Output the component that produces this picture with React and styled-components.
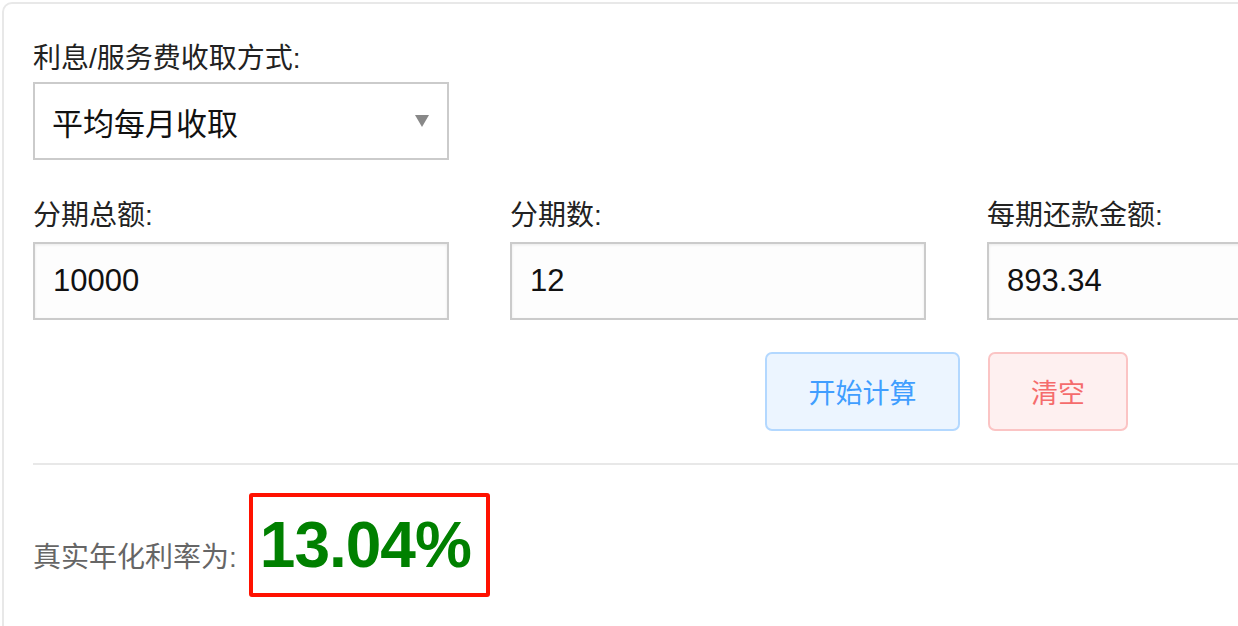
import React from 'react'
import styled, {createGlobalStyle} from 'styled-components'

const GlobalStyle = createGlobalStyle`
  html, body {
    margin: 0;
    padding: 0;
    background: #fff;
    overflow: hidden;
  }
  body {
    font-family: "Liberation Sans", "Noto Sans CJK SC", sans-serif;
    color: #222;
  }
`

const Card = styled.section`
  box-sizing: border-box;
  width: 1436px;
  margin: 2px 0 0 2px;
  padding: 38px 29px 40px;
  border: 2px solid #e8e8e8;
  border-radius: 10px;
`

const Label = styled.div`
  font-size: 28px;
  line-height: 34px;
  color: #222;
  margin-bottom: ${p => p.gap || 6}px;
`

const Select = styled.div`
  box-sizing: border-box;
  width: 416px;
  height: 78px;
  display: flex;
  align-items: center;
  justify-content: space-between;
  padding: 0 18px 0 17px;
  border: 2px solid #cbcbcb;
  background: #fff;
  font-size: 31px;
  color: #111;
`

const Caret = styled.svg`
  width: 14px;
  height: 12px;
  fill: #888;
`

const FieldRow = styled.div`
  display: grid;
  grid-template-columns: repeat(3, 416px);
  column-gap: 61px;
  margin-top: 39px;
`

const Field = styled.div`
  display: flex;
  flex-direction: column;
`

const Input = styled.input`
  box-sizing: border-box;
  width: 100%;
  height: 78px;
  padding: 0 18px;
  border: 2px solid #cbcbcb;
  background: #fdfdfd;
  box-shadow: inset 0 1px 3px rgba(0, 0, 0, 0.08);
  font-family: "Liberation Sans", sans-serif;
  font-size: 31px;
  color: #111;
  outline: none;
`

const Actions = styled.div`
  display: flex;
  gap: 28px;
  margin-top: 32px;
  padding-left: 732px;
`

const tones = {
  primary: {bg: '#ecf5ff', border: '#b3d8ff', color: '#409eff'},
  danger: {bg: '#fef0f0', border: '#fbc4c4', color: '#f56c6c'},
}

const Button = styled.button`
  box-sizing: border-box;
  width: ${p => p.$w}px;
  height: 79px;
  border-radius: 7px;
  border: 2px solid ${p => tones[p.$tone].border};
  background: ${p => tones[p.$tone].bg};
  color: ${p => tones[p.$tone].color};
  font-family: "Liberation Sans", "Noto Sans CJK SC", sans-serif;
  font-size: 27px;
  cursor: pointer;
`

const Divider = styled.hr`
  margin: 32px 0 28px;
  border: none;
  border-top: 2px solid #e8e8e8;
`

const Result = styled.div`
  display: flex;
  align-items: baseline;
  gap: 12px;
`

const ResultLabel = styled.span`
  font-size: 28px;
  color: #666;
`

const RateBox = styled.div`
  box-sizing: border-box;
  width: 241px;
  height: 104px;
  border: 4px solid #ff1100;
  border-radius: 3px;
  padding-left: 7px;
  font-family: "Liberation Sans", sans-serif;
  font-weight: bold;
  font-size: 64px;
  letter-spacing: -1px;
  line-height: 96px;
  color: #008000;
`

export default function App() {
  return (
    <>
      <GlobalStyle />
      <Card>
        <Label>利息/服务费收取方式:</Label>
        <Select>
          <span>平均每月收取</span>
          <Caret viewBox="0 0 14 12">
            <polygon points="0,0 14,0 7,12" />
          </Caret>
        </Select>

        <FieldRow>
          <Field>
            <Label gap={9}>分期总额:</Label>
            <Input defaultValue="10000" />
          </Field>
          <Field>
            <Label gap={9}>分期数:</Label>
            <Input defaultValue="12" />
          </Field>
          <Field>
            <Label gap={9}>每期还款金额:</Label>
            <Input defaultValue="893.34" />
          </Field>
        </FieldRow>

        <Actions>
          <Button $tone="primary" $w={195}>开始计算</Button>
          <Button $tone="danger" $w={140}>清空</Button>
        </Actions>

        <Divider />

        <Result>
          <ResultLabel>真实年化利率为:</ResultLabel>
          <RateBox>13.04%</RateBox>
        </Result>
      </Card>
    </>
  )
}
